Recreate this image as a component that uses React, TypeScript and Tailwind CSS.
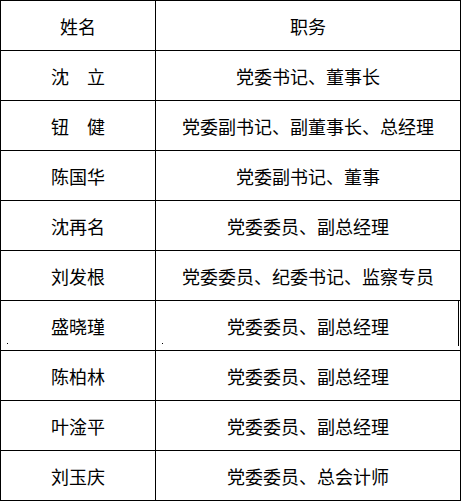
import React from "react";

const rows: [string, string][] = [
  ["姓名", "职务"],
  ["沈\u3000立", "党委书记、董事长"],
  ["钮\u3000健", "党委副书记、副董事长、总经理"],
  ["陈国华", "党委副书记、董事"],
  ["沈再名", "党委委员、副总经理"],
  ["刘发根", "党委委员、纪委书记、监察专员"],
  ["盛晓瑾", "党委委员、副总经理"],
  ["陈柏林", "党委委员、副总经理"],
  ["叶淦平", "党委委员、副总经理"],
  ["刘玉庆", "党委委员、总会计师"],
];

export default function App() {
  return (
    <div
      className="w-[461px] h-[501px] bg-white text-black text-[18px] leading-none"
      style={{ fontFamily: '"Noto Sans CJK SC", "Noto Sans", sans-serif' }}
    >
      <div className="grid grid-cols-[155px_305px] border-l border-t border-black w-[461px]">
        {rows.map(([name, role], i) => (
          <React.Fragment key={i}>
            <div className="relative h-[50px] border-r border-b border-black flex items-center justify-center">
              <span>{name}</span>
              {i === 6 && <span className="absolute left-[6px] top-[42px] w-px h-px bg-black" />}
            </div>
            <div className="relative h-[50px] border-r border-b border-black flex items-center justify-center">
              <span>{role}</span>
              {i === 6 && <span className="absolute left-[6px] top-[42px] w-px h-px bg-black" />}
              {i === 6 && <span className="absolute right-[1px] top-0 w-px h-[45px] bg-black" />}
            </div>
          </React.Fragment>
        ))}
      </div>
    </div>
  );
}
